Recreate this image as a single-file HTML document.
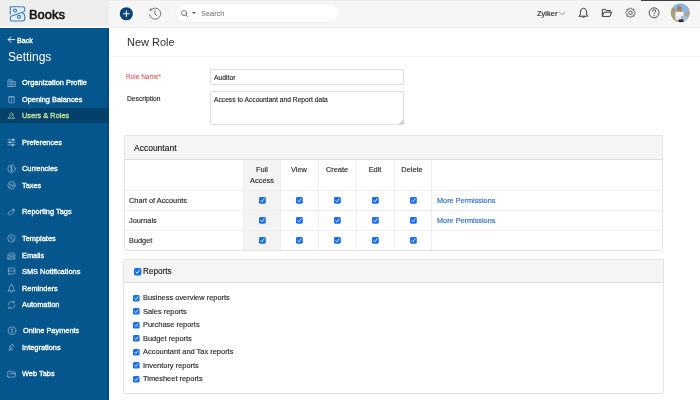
<!DOCTYPE html><html><head><meta charset="utf-8"><style>
html,body{margin:0;padding:0;width:700px;height:400px;overflow:hidden;background:#fff;}
body{position:relative;font-family:"Liberation Sans",sans-serif;}
.t{position:absolute;white-space:nowrap;will-change:transform;}
.r{position:absolute;box-sizing:border-box;}
svg{position:absolute;overflow:visible;}
</style></head><body>
<div class="r" style="left:0px;top:0px;width:700.00px;height:28.00px;background:#f6f6f6;border-top:1.2px solid #ececec;border-bottom:1.6px solid #eeeeee;"></div>
<div class="r" style="left:0px;top:0px;width:108.60px;height:27.80px;background:#fafafa;"></div>
<div class="r" style="left:0px;top:0px;width:108.60px;height:26.00px;background:#eeeeee;"></div>
<div class="t" style="left:28.60px;top:8.78px;font-size:12.9px;line-height:12.9px;color:#111;font-weight:normal;-webkit-text-stroke:0.6px #111;">Books</div>
<div class="r" style="left:0px;top:27.8px;width:108.60px;height:372.20px;background:#05568c;"></div>
<div class="t" style="left:17.20px;top:37.99px;font-size:7.1px;line-height:7.1px;color:#fff;font-weight:normal;-webkit-text-stroke:0.32px #fff;">Back</div>
<div class="t" style="left:8.00px;top:51.34px;font-size:12px;line-height:12px;color:#fff;font-weight:normal;">Settings</div>
<div class="r" style="left:106.8px;top:27.8px;width:1.80px;height:372.20px;background:#044c7e;"></div>
<div class="r" style="left:0px;top:107.6px;width:108.50px;height:15.60px;background:#03416b;"></div>
<div class="t" style="left:21.75px;top:79.44px;font-size:7.4px;line-height:7.4px;color:#fff;font-weight:normal;-webkit-text-stroke:0.32px #fff;">Organization Profile</div>
<div class="t" style="left:21.75px;top:95.94px;font-size:7.4px;line-height:7.4px;color:#fff;font-weight:normal;-webkit-text-stroke:0.32px #fff;">Opening Balances</div>
<div class="t" style="left:21.75px;top:112.44px;font-size:7.4px;line-height:7.4px;color:#c3e19a;font-weight:normal;-webkit-text-stroke:0.32px #c3e19a;">Users &amp; Roles</div>
<div class="t" style="left:21.75px;top:138.54px;font-size:7.4px;line-height:7.4px;color:#fff;font-weight:normal;-webkit-text-stroke:0.32px #fff;">Preferences</div>
<div class="t" style="left:21.75px;top:165.24px;font-size:7.4px;line-height:7.4px;color:#fff;font-weight:normal;-webkit-text-stroke:0.32px #fff;">Currencies</div>
<div class="t" style="left:21.75px;top:181.74px;font-size:7.4px;line-height:7.4px;color:#fff;font-weight:normal;-webkit-text-stroke:0.32px #fff;">Taxes</div>
<div class="t" style="left:21.75px;top:208.24px;font-size:7.4px;line-height:7.4px;color:#fff;font-weight:normal;-webkit-text-stroke:0.32px #fff;">Reporting Tags</div>
<div class="t" style="left:21.75px;top:235.04px;font-size:7.4px;line-height:7.4px;color:#fff;font-weight:normal;-webkit-text-stroke:0.32px #fff;">Templates</div>
<div class="t" style="left:21.75px;top:251.54px;font-size:7.4px;line-height:7.4px;color:#fff;font-weight:normal;-webkit-text-stroke:0.32px #fff;">Emails</div>
<div class="t" style="left:21.75px;top:268.04px;font-size:7.4px;line-height:7.4px;color:#fff;font-weight:normal;-webkit-text-stroke:0.32px #fff;">SMS Notifications</div>
<div class="t" style="left:21.75px;top:284.54px;font-size:7.4px;line-height:7.4px;color:#fff;font-weight:normal;-webkit-text-stroke:0.32px #fff;">Reminders</div>
<div class="t" style="left:21.75px;top:300.94px;font-size:7.4px;line-height:7.4px;color:#fff;font-weight:normal;-webkit-text-stroke:0.32px #fff;">Automation</div>
<div class="t" style="left:22.50px;top:327.34px;font-size:7.4px;line-height:7.4px;color:#fff;font-weight:normal;-webkit-text-stroke:0.32px #fff;">Online Payments</div>
<div class="t" style="left:21.75px;top:343.84px;font-size:7.4px;line-height:7.4px;color:#fff;font-weight:normal;-webkit-text-stroke:0.32px #fff;">Integrations</div>
<div class="t" style="left:21.75px;top:370.34px;font-size:7.4px;line-height:7.4px;color:#fff;font-weight:normal;-webkit-text-stroke:0.32px #fff;">Web Tabs</div>
<div class="t" style="left:126.60px;top:36.69px;font-size:11px;line-height:11px;color:#303030;font-weight:normal;">New Role</div>
<div class="r" style="left:109px;top:56.4px;width:591.00px;height:1.00px;background:#f4f4f4;"></div>
<div class="t" style="left:126.40px;top:73.50px;font-size:6.5px;line-height:6.5px;color:#e5413b;font-weight:normal;">Role Name*</div>
<div class="t" style="left:126.50px;top:95.73px;font-size:6.7px;line-height:6.7px;color:#2a2a2a;font-weight:normal;-webkit-text-stroke:0.15px #2a2a2a;">Description</div>
<div class="r" style="left:209.6px;top:68.8px;width:194.80px;height:16.20px;border:1px solid #dde1e6;background:#fff;border-radius:1px;"></div>
<div class="t" style="left:214.40px;top:75.14px;font-size:6.8px;line-height:6.8px;color:#2a2a2a;font-weight:normal;-webkit-text-stroke:0.15px #2a2a2a;">Auditor</div>
<div class="r" style="left:209.6px;top:91.3px;width:194.80px;height:33.70px;border:1px solid #dde1e6;background:#fff;border-radius:1px;"></div>
<svg style="left:0;top:0" width="700" height="130"><path d="M399.6 124.1 L403.3 120.4 M401.6 124.1 L403.3 122.4" stroke="#7a7a7a" stroke-width="0.7"/></svg>
<div class="t" style="left:214.40px;top:97.03px;font-size:6.7px;line-height:6.7px;color:#2a2a2a;font-weight:normal;-webkit-text-stroke:0.15px #2a2a2a;">Access to Accountant and Report data</div>
<div class="r" style="left:124px;top:135px;width:539.00px;height:115.50px;border:1px solid #e4e4e4;border-radius:2px;background:#fff;"></div>
<div class="r" style="left:124px;top:135px;width:539.00px;height:24.60px;border:1px solid #e4e4e4;border-bottom:1px solid #dddddd;border-radius:2px 2px 0 0;background:#f5f5f5;"></div>
<div class="t" style="left:134.00px;top:143.80px;font-size:8.5px;line-height:8.5px;color:#151515;font-weight:normal;-webkit-text-stroke:0.12px #151515;">Accountant</div>
<div class="r" style="left:243.0px;top:159.6px;width:37.20px;height:90.40px;background:#f3f3f3;"></div>
<div class="r" style="left:243.0px;top:159.6px;width:0.90px;height:90.40px;background:#eeeeee;"></div>
<div class="r" style="left:280.2px;top:159.6px;width:0.90px;height:90.40px;background:#eeeeee;"></div>
<div class="r" style="left:318.2px;top:159.6px;width:0.90px;height:90.40px;background:#eeeeee;"></div>
<div class="r" style="left:356.1px;top:159.6px;width:0.90px;height:90.40px;background:#eeeeee;"></div>
<div class="r" style="left:393.7px;top:159.6px;width:0.90px;height:90.40px;background:#eeeeee;"></div>
<div class="r" style="left:431.2px;top:159.6px;width:0.90px;height:90.40px;background:#eeeeee;"></div>
<div class="r" style="left:124.5px;top:190.2px;width:538.00px;height:0.90px;background:#eeeeee;"></div>
<div class="r" style="left:124.5px;top:210.2px;width:538.00px;height:0.90px;background:#eeeeee;"></div>
<div class="r" style="left:124.5px;top:230.2px;width:538.00px;height:0.90px;background:#eeeeee;"></div>
<div class="t" style="left:261.60px;top:166.34px;font-size:7.4px;line-height:7.4px;color:#2a2a2a;font-weight:normal;transform:translateX(-50%);-webkit-text-stroke:0.15px #2a2a2a;">Full</div>
<div class="t" style="left:299.20px;top:166.34px;font-size:7.4px;line-height:7.4px;color:#2a2a2a;font-weight:normal;transform:translateX(-50%);-webkit-text-stroke:0.15px #2a2a2a;">View</div>
<div class="t" style="left:337.15px;top:166.34px;font-size:7.4px;line-height:7.4px;color:#2a2a2a;font-weight:normal;transform:translateX(-50%);-webkit-text-stroke:0.15px #2a2a2a;">Create</div>
<div class="t" style="left:374.90px;top:166.34px;font-size:7.4px;line-height:7.4px;color:#2a2a2a;font-weight:normal;transform:translateX(-50%);-webkit-text-stroke:0.15px #2a2a2a;">Edit</div>
<div class="t" style="left:412.45px;top:166.34px;font-size:7.4px;line-height:7.4px;color:#2a2a2a;font-weight:normal;transform:translateX(-50%);-webkit-text-stroke:0.15px #2a2a2a;">Delete</div>
<div class="t" style="left:261.60px;top:176.94px;font-size:7.4px;line-height:7.4px;color:#2a2a2a;font-weight:normal;transform:translateX(-50%);-webkit-text-stroke:0.15px #2a2a2a;">Access</div>
<div class="t" style="left:128.90px;top:197.08px;font-size:7.35px;line-height:7.35px;color:#2a2a2a;font-weight:normal;-webkit-text-stroke:0.15px #2a2a2a;">Chart of Accounts</div>
<svg style="left:258.70000000000005px;top:197.3px" width="6.8" height="6.8" viewBox="0 0 14 14"><rect x="0" y="0" width="14" height="14" rx="3" fill="#1a6fef"/><path d="M3.8 7.6 L6 10 L10.4 3.8" stroke="#fff" stroke-width="1.7" fill="none" stroke-linecap="round" stroke-linejoin="round"/></svg>
<svg style="left:296.3px;top:197.3px" width="6.8" height="6.8" viewBox="0 0 14 14"><rect x="0" y="0" width="14" height="14" rx="3" fill="#1a6fef"/><path d="M3.8 7.6 L6 10 L10.4 3.8" stroke="#fff" stroke-width="1.7" fill="none" stroke-linecap="round" stroke-linejoin="round"/></svg>
<svg style="left:334.25px;top:197.3px" width="6.8" height="6.8" viewBox="0 0 14 14"><rect x="0" y="0" width="14" height="14" rx="3" fill="#1a6fef"/><path d="M3.8 7.6 L6 10 L10.4 3.8" stroke="#fff" stroke-width="1.7" fill="none" stroke-linecap="round" stroke-linejoin="round"/></svg>
<svg style="left:372.0px;top:197.3px" width="6.8" height="6.8" viewBox="0 0 14 14"><rect x="0" y="0" width="14" height="14" rx="3" fill="#1a6fef"/><path d="M3.8 7.6 L6 10 L10.4 3.8" stroke="#fff" stroke-width="1.7" fill="none" stroke-linecap="round" stroke-linejoin="round"/></svg>
<svg style="left:409.55px;top:197.3px" width="6.8" height="6.8" viewBox="0 0 14 14"><rect x="0" y="0" width="14" height="14" rx="3" fill="#1a6fef"/><path d="M3.8 7.6 L6 10 L10.4 3.8" stroke="#fff" stroke-width="1.7" fill="none" stroke-linecap="round" stroke-linejoin="round"/></svg>
<div class="t" style="left:436.60px;top:196.72px;font-size:7.3px;line-height:7.3px;color:#2a6fc2;font-weight:normal;-webkit-text-stroke:0.15px #2a6fc2;">More Permissions</div>
<div class="t" style="left:128.90px;top:216.88px;font-size:7.35px;line-height:7.35px;color:#2a2a2a;font-weight:normal;-webkit-text-stroke:0.15px #2a2a2a;">Journals</div>
<svg style="left:258.70000000000005px;top:217.1px" width="6.8" height="6.8" viewBox="0 0 14 14"><rect x="0" y="0" width="14" height="14" rx="3" fill="#1a6fef"/><path d="M3.8 7.6 L6 10 L10.4 3.8" stroke="#fff" stroke-width="1.7" fill="none" stroke-linecap="round" stroke-linejoin="round"/></svg>
<svg style="left:296.3px;top:217.1px" width="6.8" height="6.8" viewBox="0 0 14 14"><rect x="0" y="0" width="14" height="14" rx="3" fill="#1a6fef"/><path d="M3.8 7.6 L6 10 L10.4 3.8" stroke="#fff" stroke-width="1.7" fill="none" stroke-linecap="round" stroke-linejoin="round"/></svg>
<svg style="left:334.25px;top:217.1px" width="6.8" height="6.8" viewBox="0 0 14 14"><rect x="0" y="0" width="14" height="14" rx="3" fill="#1a6fef"/><path d="M3.8 7.6 L6 10 L10.4 3.8" stroke="#fff" stroke-width="1.7" fill="none" stroke-linecap="round" stroke-linejoin="round"/></svg>
<svg style="left:372.0px;top:217.1px" width="6.8" height="6.8" viewBox="0 0 14 14"><rect x="0" y="0" width="14" height="14" rx="3" fill="#1a6fef"/><path d="M3.8 7.6 L6 10 L10.4 3.8" stroke="#fff" stroke-width="1.7" fill="none" stroke-linecap="round" stroke-linejoin="round"/></svg>
<svg style="left:409.55px;top:217.1px" width="6.8" height="6.8" viewBox="0 0 14 14"><rect x="0" y="0" width="14" height="14" rx="3" fill="#1a6fef"/><path d="M3.8 7.6 L6 10 L10.4 3.8" stroke="#fff" stroke-width="1.7" fill="none" stroke-linecap="round" stroke-linejoin="round"/></svg>
<div class="t" style="left:436.60px;top:216.52px;font-size:7.3px;line-height:7.3px;color:#2a6fc2;font-weight:normal;-webkit-text-stroke:0.15px #2a6fc2;">More Permissions</div>
<div class="t" style="left:128.90px;top:236.88px;font-size:7.35px;line-height:7.35px;color:#2a2a2a;font-weight:normal;-webkit-text-stroke:0.15px #2a2a2a;">Budget</div>
<svg style="left:258.70000000000005px;top:237.1px" width="6.8" height="6.8" viewBox="0 0 14 14"><rect x="0" y="0" width="14" height="14" rx="3" fill="#1a6fef"/><path d="M3.8 7.6 L6 10 L10.4 3.8" stroke="#fff" stroke-width="1.7" fill="none" stroke-linecap="round" stroke-linejoin="round"/></svg>
<svg style="left:296.3px;top:237.1px" width="6.8" height="6.8" viewBox="0 0 14 14"><rect x="0" y="0" width="14" height="14" rx="3" fill="#1a6fef"/><path d="M3.8 7.6 L6 10 L10.4 3.8" stroke="#fff" stroke-width="1.7" fill="none" stroke-linecap="round" stroke-linejoin="round"/></svg>
<svg style="left:334.25px;top:237.1px" width="6.8" height="6.8" viewBox="0 0 14 14"><rect x="0" y="0" width="14" height="14" rx="3" fill="#1a6fef"/><path d="M3.8 7.6 L6 10 L10.4 3.8" stroke="#fff" stroke-width="1.7" fill="none" stroke-linecap="round" stroke-linejoin="round"/></svg>
<svg style="left:372.0px;top:237.1px" width="6.8" height="6.8" viewBox="0 0 14 14"><rect x="0" y="0" width="14" height="14" rx="3" fill="#1a6fef"/><path d="M3.8 7.6 L6 10 L10.4 3.8" stroke="#fff" stroke-width="1.7" fill="none" stroke-linecap="round" stroke-linejoin="round"/></svg>
<svg style="left:409.55px;top:237.1px" width="6.8" height="6.8" viewBox="0 0 14 14"><rect x="0" y="0" width="14" height="14" rx="3" fill="#1a6fef"/><path d="M3.8 7.6 L6 10 L10.4 3.8" stroke="#fff" stroke-width="1.7" fill="none" stroke-linecap="round" stroke-linejoin="round"/></svg>
<div class="r" style="left:123.3px;top:259px;width:540.30px;height:135.00px;border:1px solid #e4e4e4;border-radius:2px;background:#fff;"></div>
<div class="r" style="left:123.3px;top:259px;width:540.30px;height:23.80px;border:1px solid #e4e4e4;border-bottom:1px solid #dddddd;border-radius:2px 2px 0 0;background:#f5f5f5;"></div>
<svg style="left:133.6px;top:268.2px" width="7.4" height="7.4" viewBox="0 0 14 14"><rect x="0" y="0" width="14" height="14" rx="3" fill="#1a6fef"/><path d="M3.8 7.6 L6 10 L10.4 3.8" stroke="#fff" stroke-width="1.7" fill="none" stroke-linecap="round" stroke-linejoin="round"/></svg>
<div class="t" style="left:142.80px;top:268.46px;font-size:8.2px;line-height:8.2px;color:#151515;font-weight:normal;-webkit-text-stroke:0.12px #151515;">Reports</div>
<svg style="left:133.3px;top:294.9px" width="6.6" height="6.6" viewBox="0 0 14 14"><rect x="0" y="0" width="14" height="14" rx="3" fill="#1a6fef"/><path d="M3.8 7.6 L6 10 L10.4 3.8" stroke="#fff" stroke-width="1.7" fill="none" stroke-linecap="round" stroke-linejoin="round"/></svg>
<div class="t" style="left:142.90px;top:294.19px;font-size:7.45px;line-height:7.45px;color:#2a2a2a;font-weight:normal;-webkit-text-stroke:0.15px #2a2a2a;">Business overview reports</div>
<svg style="left:133.3px;top:308.4px" width="6.6" height="6.6" viewBox="0 0 14 14"><rect x="0" y="0" width="14" height="14" rx="3" fill="#1a6fef"/><path d="M3.8 7.6 L6 10 L10.4 3.8" stroke="#fff" stroke-width="1.7" fill="none" stroke-linecap="round" stroke-linejoin="round"/></svg>
<div class="t" style="left:142.90px;top:307.69px;font-size:7.45px;line-height:7.45px;color:#2a2a2a;font-weight:normal;-webkit-text-stroke:0.15px #2a2a2a;">Sales reports</div>
<svg style="left:133.3px;top:321.9px" width="6.6" height="6.6" viewBox="0 0 14 14"><rect x="0" y="0" width="14" height="14" rx="3" fill="#1a6fef"/><path d="M3.8 7.6 L6 10 L10.4 3.8" stroke="#fff" stroke-width="1.7" fill="none" stroke-linecap="round" stroke-linejoin="round"/></svg>
<div class="t" style="left:142.90px;top:321.19px;font-size:7.45px;line-height:7.45px;color:#2a2a2a;font-weight:normal;-webkit-text-stroke:0.15px #2a2a2a;">Purchase reports</div>
<svg style="left:133.3px;top:335.4px" width="6.6" height="6.6" viewBox="0 0 14 14"><rect x="0" y="0" width="14" height="14" rx="3" fill="#1a6fef"/><path d="M3.8 7.6 L6 10 L10.4 3.8" stroke="#fff" stroke-width="1.7" fill="none" stroke-linecap="round" stroke-linejoin="round"/></svg>
<div class="t" style="left:142.90px;top:334.69px;font-size:7.45px;line-height:7.45px;color:#2a2a2a;font-weight:normal;-webkit-text-stroke:0.15px #2a2a2a;">Budget reports</div>
<svg style="left:133.3px;top:348.9px" width="6.6" height="6.6" viewBox="0 0 14 14"><rect x="0" y="0" width="14" height="14" rx="3" fill="#1a6fef"/><path d="M3.8 7.6 L6 10 L10.4 3.8" stroke="#fff" stroke-width="1.7" fill="none" stroke-linecap="round" stroke-linejoin="round"/></svg>
<div class="t" style="left:142.90px;top:348.19px;font-size:7.45px;line-height:7.45px;color:#2a2a2a;font-weight:normal;-webkit-text-stroke:0.15px #2a2a2a;">Accountant and Tax reports</div>
<svg style="left:133.3px;top:362.4px" width="6.6" height="6.6" viewBox="0 0 14 14"><rect x="0" y="0" width="14" height="14" rx="3" fill="#1a6fef"/><path d="M3.8 7.6 L6 10 L10.4 3.8" stroke="#fff" stroke-width="1.7" fill="none" stroke-linecap="round" stroke-linejoin="round"/></svg>
<div class="t" style="left:142.90px;top:361.69px;font-size:7.45px;line-height:7.45px;color:#2a2a2a;font-weight:normal;-webkit-text-stroke:0.15px #2a2a2a;">Inventory reports</div>
<svg style="left:133.3px;top:375.9px" width="6.6" height="6.6" viewBox="0 0 14 14"><rect x="0" y="0" width="14" height="14" rx="3" fill="#1a6fef"/><path d="M3.8 7.6 L6 10 L10.4 3.8" stroke="#fff" stroke-width="1.7" fill="none" stroke-linecap="round" stroke-linejoin="round"/></svg>
<div class="t" style="left:142.90px;top:375.19px;font-size:7.45px;line-height:7.45px;color:#2a2a2a;font-weight:normal;-webkit-text-stroke:0.15px #2a2a2a;">Timesheet reports</div>
<div class="r" style="left:175.7px;top:4.3px;width:163.70px;height:18.10px;background:#fff;border-radius:9px;box-shadow:0 0 0 0.5px #e8e8e8;"></div>
<div class="t" style="left:201.00px;top:9.94px;font-size:7.4px;line-height:7.4px;color:#6a6a6a;font-weight:normal;">Search</div>
<div class="t" style="left:536.70px;top:9.85px;font-size:7.5px;line-height:7.5px;color:#2a2a2a;font-weight:normal;-webkit-text-stroke:0.15px #2a2a2a;">Zylker</div>
<div class="r" style="left:641px;top:0px;width:59.00px;height:0.95px;background:#404040;"></div>
<svg style="left:0;top:0" width="109" height="400"><g stroke="#fff" fill="none" stroke-width="0.75" stroke-linecap="round" stroke-linejoin="round" opacity="0.55"><path d="M8 86.6 V79.8 H11.8 V86.6 Z M11.8 81.6 H15.2 V86.6 H8"/><path d="M9.3 81.4 H10.5 M9.3 83 H10.5 M9.3 84.6 H10.5 M13 83 H14 M13 84.6 H14"/></g><g stroke="#fff" fill="none" stroke-width="0.75" stroke-linecap="round" stroke-linejoin="round" opacity="0.55"><rect x="8.8" y="96.6" width="5.4" height="6.2" rx="0.4"/><path d="M8.8 97.2 H14.2 M11.5 98.9 V101.2"/></g><g stroke="#c3e19a" fill="none" stroke-width="0.75" stroke-linecap="round" stroke-linejoin="round" opacity="0.75"><circle cx="11.4" cy="114.4" r="1.6"/><path d="M9.6 116.2 Q8.3 116.8 8.1 118.6 H14.7 Q14.5 116.8 13.2 116.2"/><path d="M10 118.6 V117.6 M12.8 118.6 V117.6"/></g><g transform="translate(0,-0.5)"><g stroke="#fff" fill="none" stroke-width="0.75" stroke-linecap="round" stroke-linejoin="round" opacity="0.6"><path d="M8 140.2 H15 M8 142.8 H15 M8 145.4 H15"/><circle cx="13" cy="140.2" r="0.9" fill="#fff"/><circle cx="9.8" cy="142.8" r="0.9" fill="#fff"/><circle cx="12.6" cy="145.4" r="0.9" fill="#fff"/></g><g stroke="#fff" fill="none" stroke-width="0.75" stroke-linecap="round" stroke-linejoin="round" opacity="0.55"><circle cx="11.5" cy="169.2" r="3.7"/><path d="M12.6 167.8 Q12.2 167.2 11.4 167.2 Q10.4 167.2 10.4 168.2 Q10.4 169 11.5 169.2 Q12.6 169.4 12.6 170.3 Q12.6 171.2 11.5 171.2 Q10.7 171.2 10.3 170.6 M11.5 166.4 V172"/></g><g stroke="#fff" fill="none" stroke-width="0.75" stroke-linecap="round" stroke-linejoin="round" opacity="0.55"><circle cx="11.5" cy="185.8" r="3.7"/><path d="M10 187.6 V184 L13 187.6 V184"/></g><g stroke="#fff" fill="none" stroke-width="0.75" stroke-linecap="round" stroke-linejoin="round" opacity="0.55"><path d="M8.4 213.4 L11.9 209.9 L14 209.4 L14.5 209.9 L14 212 L10.5 215.5 Q9.9 216 9.3 215.5 L8.4 214.6 Q8 214 8.4 213.4 Z"/><circle cx="13" cy="210.8" r="0.4"/></g><g stroke="#fff" fill="none" stroke-width="0.75" stroke-linecap="round" stroke-linejoin="round" opacity="0.55"><path d="M14.7 240.8 Q13.6 242.6 11.5 242.6 A3.7 3.7 0 1 1 15.2 238.9 Q15.2 240 14 240 Q12.6 240 12.6 241.2"/><path d="M10 238.4 L11.7 239.6 M11 236.8 L12 238.8"/></g><g stroke="#fff" fill="none" stroke-width="0.75" stroke-linecap="round" stroke-linejoin="round" opacity="0.55"><path d="M8.2 255 L9.6 253.4 H13.4 L14.8 255 V259.6 H8.2 Z M8.2 255.4 L11.5 257.8 L14.8 255.4 M8.2 259.6 L10.4 257.2 M14.8 259.6 L12.6 257.2"/><path d="M10 255.4 L11.1 256.4 L13 254.4"/></g><g stroke="#fff" fill="none" stroke-width="0.75" stroke-linecap="round" stroke-linejoin="round" opacity="0.55"><path d="M8.4 269 Q8.4 268.5 8.9 268.5 H14.3 Q14.8 268.5 14.8 269 V273.8 Q14.8 274.3 14.3 274.3 H10.2 L9 275.5 V274.3 H8.9 Q8.4 274.3 8.4 273.8 Z M8.4 271.4 H14.8"/></g><g stroke="#fff" fill="none" stroke-width="0.75" stroke-linecap="round" stroke-linejoin="round" opacity="0.55"><path d="M8.3 291.4 H14.7 Q13.6 290.6 13.6 289.4 V288.2 Q13.6 286 11.5 285.6 Q9.4 286 9.4 288.2 V289.4 Q9.4 290.6 8.3 291.4 Z M10.6 292.4 Q11.5 293.4 12.4 292.4 M11.5 285.6 V285"/></g><g stroke="#fff" fill="none" stroke-width="0.75" stroke-linecap="round" stroke-linejoin="round" opacity="0.55"><path d="M8.2 305.5 A3.4 3.4 0 0 1 14 303 M14.8 305.5 A3.4 3.4 0 0 1 9 308"/><path d="M14.3 301.6 L14.1 303.2 L12.6 303.1 M8.7 309.4 L8.9 307.8 L10.4 307.9"/></g><g stroke="#fff" fill="none" stroke-width="0.75" stroke-linecap="round" stroke-linejoin="round" opacity="0.55"><circle cx="12" cy="331.2" r="3.9"/><path d="M13.1 329.8 Q12.7 329.2 11.9 329.2 Q10.9 329.2 10.9 330.2 Q10.9 331 12 331.2 Q13.1 331.4 13.1 332.3 Q13.1 333.2 12 333.2 Q11.2 333.2 10.8 332.6"/></g><g stroke="#fff" fill="none" stroke-width="0.75" stroke-linecap="round" stroke-linejoin="round" opacity="0.55"><path d="M10.2 349.5 L9.1 350.7 M10 346.9 L12.8 349.7 Q11.6 351 10.3 349.6 Q9 348.2 10 346.9 Z M11 345.6 L12 344.6 M12.4 347 L13.4 346 M12 344.6 L14.2 346.8 M10.2 349.5 Q8.6 350.6 9.8 351.6"/></g><g stroke="#fff" fill="none" stroke-width="0.75" stroke-linecap="round" stroke-linejoin="round" opacity="0.55"><path d="M7.8 377 V372.2 Q7.8 371.6 8.4 371.6 H10.4 L11 372.4 H14.6 Q15.2 372.4 15.2 373 V377 Q15.2 377.6 14.6 377.6 H8.4 Q7.8 377.6 7.8 377 Z M10.2 374.2 H15.2"/></g></g></svg>
<svg style="left:0;top:0" width="700" height="30"><g stroke="#3380c8" fill="none" stroke-width="1.15" stroke-linejoin="round" stroke-linecap="round"><path d="M10.3 14.3 V6.7 H22.6 Q24.8 6.7 24.8 8.9 V9.9 Q24.8 11.4 23.2 12 L11.7 16 Q10.3 16.5 10.3 17.9 V19.6 Q10.3 20.95 11.6 20.95 H22.2 Q24.8 20.95 24.8 18.2 V16.2 Q24.8 13.9 22.7 13.2"/><circle cx="15" cy="10.6" r="1.5"/><circle cx="19" cy="16.9" r="1.5"/></g><g stroke="#fff" fill="none" stroke-width="0.9" stroke-linecap="round" stroke-linejoin="round"><path d="M8.2 39.6 H14.7 M10.9 36.8 L8.2 39.6 L10.9 42.4"/></g><circle cx="126.35" cy="13.75" r="6.6" fill="#0c4676"/><path d="M123.1 13.75 H129.6 M126.35 10.5 V17" stroke="#fff" stroke-width="1"/><g stroke="#707070" fill="none" stroke-width="0.95" stroke-linecap="round" stroke-linejoin="round"><path d="M151.2 9.6 A5.6 5.6 0 1 1 149.6 14.6"/><path d="M154.9 10.6 V13.9 L156.7 15.6"/></g><path d="M149.7 8.6 L152.6 9 L150.2 11.6 Z" fill="#707070"/><g stroke="#6a6a6a" fill="none" stroke-width="0.85" stroke-linecap="round"><circle cx="184.1" cy="13.1" r="2.6"/><path d="M186 15 L187.5 16.5"/></g><path d="M191.9 12.1 H196 L193.95 14.1 Z" fill="#555"/><path d="M559.5 12.4 L562.2 14.6 L564.9 12.4" stroke="#777" fill="none" stroke-width="0.7" stroke-linecap="round"/><g stroke="#333" fill="none" stroke-width="0.95" stroke-linejoin="round" stroke-linecap="round"><path d="M579.2 16.2 H587.8 Q586.6 15.4 586.6 13.8 V12 Q586.6 8.5 583.5 8.2 Q580.4 8.5 580.4 12 V13.8 Q580.4 15.4 579.2 16.2 Z"/><path d="M582.2 16.9 Q583.5 18.2 584.8 16.9"/></g><g stroke="#333" fill="none" stroke-width="0.95" stroke-linejoin="round"><path d="M602.3 16.4 V9.4 H605.4 L606.3 10.5 H610.2 V12"/><path d="M602.3 16.4 L604 12.2 H611.6 L610 16.4 Z"/></g><g stroke="#444" fill="none" stroke-width="0.9" stroke-linejoin="round"><path d="M629.69 8.73 Q630.50 6.85 631.31 8.73 Q631.95 9.24 632.77 9.33 Q634.67 8.58 633.92 10.48 Q634.01 11.30 634.52 11.94 Q636.40 12.75 634.52 13.56 Q634.01 14.20 633.92 15.02 Q634.67 16.92 632.77 16.17 Q631.95 16.26 631.31 16.77 Q630.50 18.65 629.69 16.77 Q629.05 16.26 628.23 16.17 Q626.33 16.92 627.08 15.02 Q626.99 14.20 626.48 13.56 Q624.60 12.75 626.48 11.94 Q626.99 11.30 627.08 10.48 Q626.33 8.58 628.23 9.33 Q629.05 9.24 629.69 8.73 Z"/><circle cx="630.5" cy="12.75" r="1.75"/></g><circle cx="654.1" cy="12.8" r="4.95" stroke="#3a3a3a" fill="none" stroke-width="0.9"/><path d="M652.4 11.3 Q652.4 9.7 654.1 9.7 Q655.8 9.7 655.8 11.1 Q655.8 12 654.8 12.6 Q654.1 13 654.1 14" stroke="#3a3a3a" fill="none" stroke-width="0.9" stroke-linecap="round"/><circle cx="654.1" cy="15.6" r="0.55" fill="#3a3a3a"/><defs><clipPath id="av"><circle cx="680.3" cy="12.85" r="9.65"/></clipPath><filter id="bl" filterUnits="userSpaceOnUse" x="655" y="-10" width="50" height="45"><feGaussianBlur stdDeviation="0.6"/></filter></defs><circle cx="680.3" cy="12.85" r="10.3" fill="#fff"/><g clip-path="url(#av)"><g filter="url(#bl)"><rect x="660" y="-6" width="40" height="40" fill="#8fb6d8"/><path d="M660 2 Q672 4 676.5 11 L677.5 30 H660 Z" fill="#a49e7c"/><path d="M683.5 14 Q687 12.5 700 9 V30 H683 Z" fill="#a9a489"/><path d="M660 20 H700 V30 H660 Z" fill="#b0a88c"/><path d="M676.8 12.5 Q676.6 5.6 679.4 5.6 Q682 5.8 681.8 12.5 L680.8 14 H677.8 Z" fill="#a8805f"/><path d="M675.2 12.2 Q679 10.8 683.6 12.2 L684 17.2 Q679.5 18.2 675.4 17.2 Z" fill="#f3f3f3"/><path d="M675.5 17 Q678.5 19 681.5 17.8 L680.5 20.8 Q677 20.5 675.2 19.2 Z" fill="#eceef0"/><path d="M680.8 16 Q685 14.6 688 17 L686.6 20.6 Q683.5 21.2 681 19.6 Z" fill="#a6c1da"/><path d="M678.6 19.6 Q681 18.8 683.6 19.6 L683.2 22 H678.8 Z" fill="#2a2c30"/></g></g></svg>
</body></html>
